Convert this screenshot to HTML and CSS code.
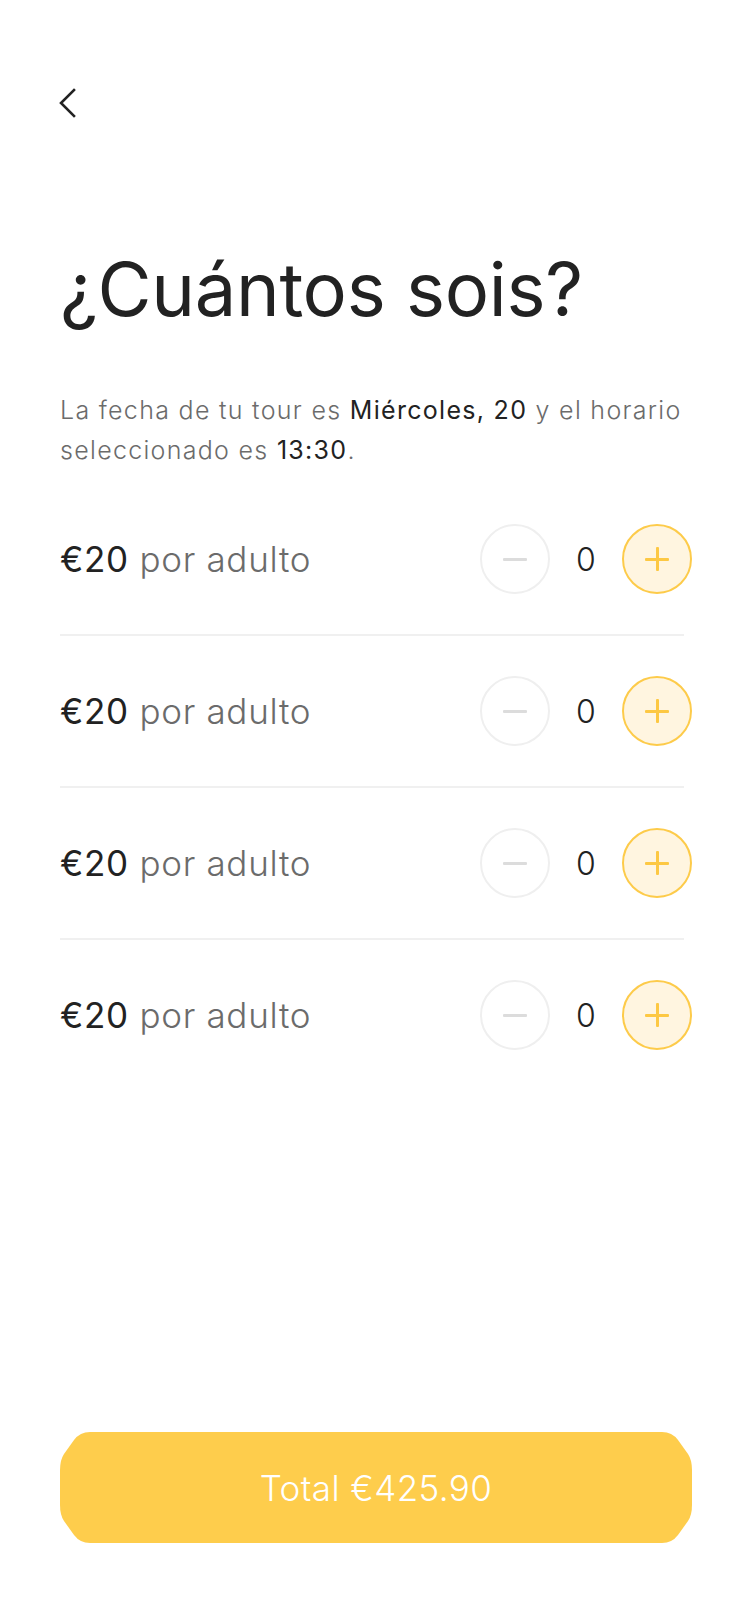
FILE: index.html
```html
<!DOCTYPE html>
<html lang="es">
<head>
<meta charset="utf-8">
<meta name="viewport" content="width=750">
<title>¿Cuántos sois?</title>
<link rel="stylesheet" href="styles.css">
</head>
<body>
<div class="page">
  <button class="back" aria-label="Volver">
    <svg width="20" height="30" viewBox="0 0 20 30"><path d="M16 2 L3 15 L16 28" fill="none" stroke="#222" stroke-width="2.6" stroke-linecap="square" stroke-linejoin="miter"/></svg>
  </button>

  <h1 class="title">¿Cuántos sois?</h1>

  <p class="intro">La fecha de tu tour es <strong>Miércoles, 20</strong> y el horario seleccionado es <strong>13:30</strong>.</p>

  <div class="rows">
    <div class="row">
      <div class="label"><span class="price">€20</span> <span class="unit">por adulto</span></div>
      <div class="stepper">
        <span class="btn minus"><span class="bar"></span></span>
        <span class="count">0</span>
        <span class="btn plus"><span class="bar"></span><span class="bar vert"></span></span>
      </div>
    </div>
    <div class="divider"></div>
    <div class="row">
      <div class="label"><span class="price">€20</span> <span class="unit">por adulto</span></div>
      <div class="stepper">
        <span class="btn minus"><span class="bar"></span></span>
        <span class="count">0</span>
        <span class="btn plus"><span class="bar"></span><span class="bar vert"></span></span>
      </div>
    </div>
    <div class="divider"></div>
    <div class="row">
      <div class="label"><span class="price">€20</span> <span class="unit">por adulto</span></div>
      <div class="stepper">
        <span class="btn minus"><span class="bar"></span></span>
        <span class="count">0</span>
        <span class="btn plus"><span class="bar"></span><span class="bar vert"></span></span>
      </div>
    </div>
    <div class="divider"></div>
    <div class="row">
      <div class="label"><span class="price">€20</span> <span class="unit">por adulto</span></div>
      <div class="stepper">
        <span class="btn minus"><span class="bar"></span></span>
        <span class="count">0</span>
        <span class="btn plus"><span class="bar"></span><span class="bar vert"></span></span>
      </div>
    </div>
  </div>

  <button class="total">Total €425.90</button>
</div>
</body>
</html>
```
FILE: styles.css
```css
* { box-sizing: border-box; }
html, body { margin: 0; padding: 0; background: #fff; }
body { width: 750px; height: 1624px; overflow: hidden; font-family: Inter, "Liberation Sans", sans-serif; color: #222; }

.page {
  display: flex;
  flex-direction: column;
  height: 1624px;
  padding: 0 58px 81px 60px;
}

.back {
  margin: 88px 0 0 -2px;
  width: 20px;
  height: 30px;
  padding: 0;
  border: 0;
  background: none;
  display: flex;
}

.title {
  margin: 134px 0 0;
  font-size: 74px;
  line-height: 74px;
  font-weight: 400;
  color: #222;
  letter-spacing: -0.3px;
}

.intro {
  margin: 64px 0 0;
  font-size: 25px;
  line-height: 40px;
  font-weight: 300;
  color: #6b6b6b;
  letter-spacing: 1.3px;
}
.intro strong { font-weight: 400; color: #222; }

.rows { margin-top: 14px; display: flex; flex-direction: column; }

.row {
  display: flex;
  align-items: center;
  justify-content: space-between;
  padding: 40px 0;
}

.divider { height: 2px; background: #f0f0f0; margin-right: 8px; }

.label { font-size: 35px; line-height: 40px; letter-spacing: 0.7px; }
.price { color: #222; font-weight: 400; }
.unit { color: #6b6b6b; font-weight: 300; }

.stepper { display: flex; align-items: center; }
.count {
  width: 72px;
  text-align: center;
  font-size: 32px;
  font-weight: 300;
  color: #222;
}

.btn {
  position: relative;
  width: 70px;
  height: 70px;
  border-radius: 50%;
  display: flex;
  align-items: center;
  justify-content: center;
}
.btn.minus { border: 2px solid #efefef; background: #fff; }
.btn.plus { border: 2px solid #fdcb4a; background: #fff5e0; }

.bar { width: 24px; height: 3px; border-radius: 1px; }
.minus .bar { background: #dcdcdc; }
.plus .bar { background: #fdc843; position: absolute; }
.plus .bar.vert { width: 3px; height: 24px; }

.total {
  margin-top: auto;
  width: 632px;
  height: 111px;
  border: 0;
  padding: 0;
  background: #fecd4c;
  color: #fff;
  font-family: Inter, "Liberation Sans", sans-serif;
  font-size: 35px;
  font-weight: 300;
  letter-spacing: 0.4px;
  clip-path: path('M 30 0 H 602 Q 612 0 618 8 L 628 22 Q 632 28 632 38 V 73 Q 632 83 628 89 L 618 103 Q 612 111 602 111 H 30 Q 20 111 14 103 L 4 89 Q 0 83 0 73 V 38 Q 0 28 4 22 L 14 8 Q 20 0 30 0 Z');
}
```
